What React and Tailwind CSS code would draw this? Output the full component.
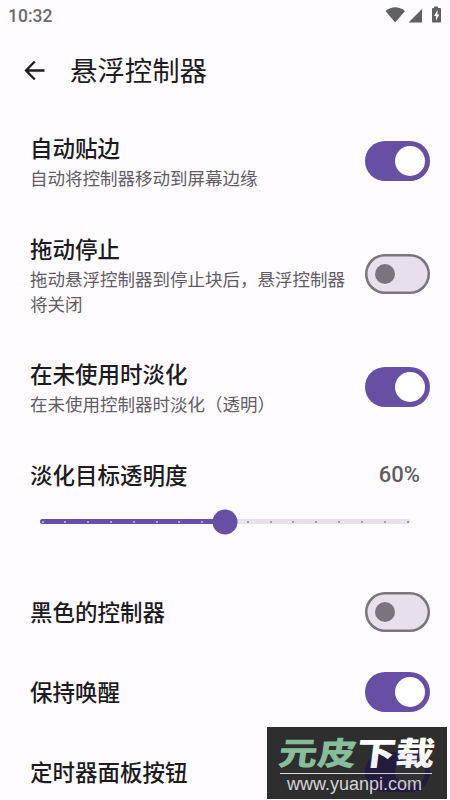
import React, { useState } from 'react';

const TICKS = Array.from({ length: 17 }, (_, i) => i);

const Switch = ({ checked, onChange }) => (
  <button
    role="switch"
    aria-checked={checked}
    onClick={onChange}
    className={`flex h-10 w-[65px] shrink-0 items-center rounded-full ${
      checked
        ? 'justify-end bg-[#6750a4] pr-[5px]'
        : 'justify-start bg-[#e7e0ec] pl-[10px] shadow-[inset_0_0_0_2.5px_#79747e]'
    }`}
  >
    <span className={checked ? 'size-[30px] rounded-full bg-white' : 'size-5 rounded-full bg-[#79747e]'} />
  </button>
);

const Title = ({ children }) => (
  <h2 className="text-[22.5px] leading-[30px] font-medium text-[#1c1b1f]">{children}</h2>
);

const SettingRow = ({ title, summary, className, defaultChecked = false }) => {
  const [checked, setChecked] = useState(defaultChecked);

  return (
    <div className={`flex shrink-0 items-center justify-between pr-5 pl-[30px] ${className}`}>
      <div className="w-[320px] pt-[2px]">
        <Title>{title}</Title>
        {summary && <p className="mt-[3px] -mb-[3px] text-[17.5px] leading-[25px] text-[#605d64]">{summary}</p>}
      </div>
      <Switch checked={checked} onChange={() => setChecked(!checked)} />
    </div>
  );
};

const StatusBar = () => (
  <div className="flex h-8 shrink-0 items-center justify-between pr-2 pl-2 text-[#605f62]">
    <span className="font-[Roboto] text-[17.5px] leading-8 font-medium text-[#6b6a6d]">10:32</span>
    <svg className="h-8 w-[58px]" viewBox="0 0 58 32" fill="currentColor">
      <path d="M1.5 11 Q11.2 3.5 21 11 L11.2 22.5 Z" />
      <path d="M38 9 V22.5 H24.5 Z" />
      <path
        fillRule="evenodd"
        d="M50 6.5 H54 V8 H56 Q57 8 57 9 V21.5 Q57 22.5 56 22.5 H49 Q48 22.5 48 21.5 V9 Q48 8 49 8 H50 Z M53.5 10 L50 16 H52 V20.5 L55.3 14.5 H53.5 Z"
      />
    </svg>
  </div>
);

const AlphaSlider = () => (
  <div className="mx-10 flex h-[25px] items-center">
    <div className="relative h-[5px] w-full rounded-full bg-[#e7e0ec]">
      <div className="h-full w-1/2 rounded-full bg-[#6750a4]" />
      <div className="absolute inset-0 flex items-center justify-between px-[1.5px]">
        {TICKS.map((i) => (
          <span key={i} className={`size-0.5 rounded-full ${i < 8 ? 'bg-[#c9bfe2]' : 'bg-[#8b8591]'}`} />
        ))}
      </div>
      <div className="absolute top-1/2 left-1/2 size-[25px] -translate-1/2 rounded-full bg-[#6750a4]" />
    </div>
  </div>
);

const Watermark = () => (
  <div className="absolute top-[727px] left-[267px] h-[72px] w-[180px] bg-[#2e2e2e]">
    <div className="absolute top-[25px] left-[98px] h-10 w-[65px] rounded-full bg-[#1e1736]" />
    <div className="absolute top-[30px] left-[128px] size-[30px] rounded-full bg-[#2e2e2e]" />
    <div className="relative flex h-full flex-col">
      <div className="ml-[13px] flex h-[47px] w-[152px] items-end border-b border-[#d8ded9]">
        <p className="-mb-px -ml-[4px] origin-bottom-left -skew-x-6 scale-y-[0.82] text-[39px] leading-[48px] font-black whitespace-nowrap text-white">
          <span className="text-[#86bd9a]">元皮</span>下载
        </p>
      </div>
      <p className="ml-5 font-['Liberation_Sans'] text-[18px] leading-[20px] text-[#d5d5d5]">www.yuanpi.com</p>
    </div>
    {/* tint of the switch that shows through the letters */}
    <div className="absolute top-[25px] left-[98px] h-10 w-[65px] rounded-full bg-[#6750a4]/8" />
  </div>
);

const App = () => {
  return (
    <div className="relative flex h-[800px] w-[450px] flex-col overflow-hidden bg-[#fffbfe] font-[Roboto,'Noto_Sans_CJK_SC',sans-serif]">
      <StatusBar />

      <header className="flex h-[78px] shrink-0 items-center pl-[22px]">
        <svg className="-mt-[2px] size-[25px]" viewBox="0 0 25 25" fill="none" stroke="#1c1b1f" strokeWidth="2.3">
          <path d="M22.5 12.5 H4.5 M12.8 3.5 L4 12.5 L12.8 21.5" />
        </svg>
        <h1 className="mt-[2px] ml-[23px] text-[27.4px] leading-10 text-[#1c1b1f]">悬浮控制器</h1>
      </header>

      <SettingRow className="h-[101px]" title="自动贴边" summary="自动将控制器移动到屏幕边缘" defaultChecked />
      <SettingRow className="h-[125px]" title="拖动停止" summary="拖动悬浮控制器到停止块后，悬浮控制器将关闭" />
      <SettingRow className="h-[101px]" title="在未使用时淡化" summary="在未使用控制器时淡化（透明）" defaultChecked />

      <div className="h-[135px] shrink-0 pt-[24px]">
        <div className="mb-[18px] flex items-center justify-between pr-[30px] pl-[30px]">
          <Title>淡化目标透明度</Title>
          <span className="-mt-[2px] text-[22px] leading-[30px] font-medium text-[#5f5d64]">60%</span>
        </div>
        <AlphaSlider />
      </div>

      <SettingRow className="h-20" title="黑色的控制器" />
      <SettingRow className="h-20" title="保持唤醒" defaultChecked />
      <SettingRow className="h-20" title="定时器面板按钮" defaultChecked />

      <Watermark />
    </div>
  );
};

export default App;
